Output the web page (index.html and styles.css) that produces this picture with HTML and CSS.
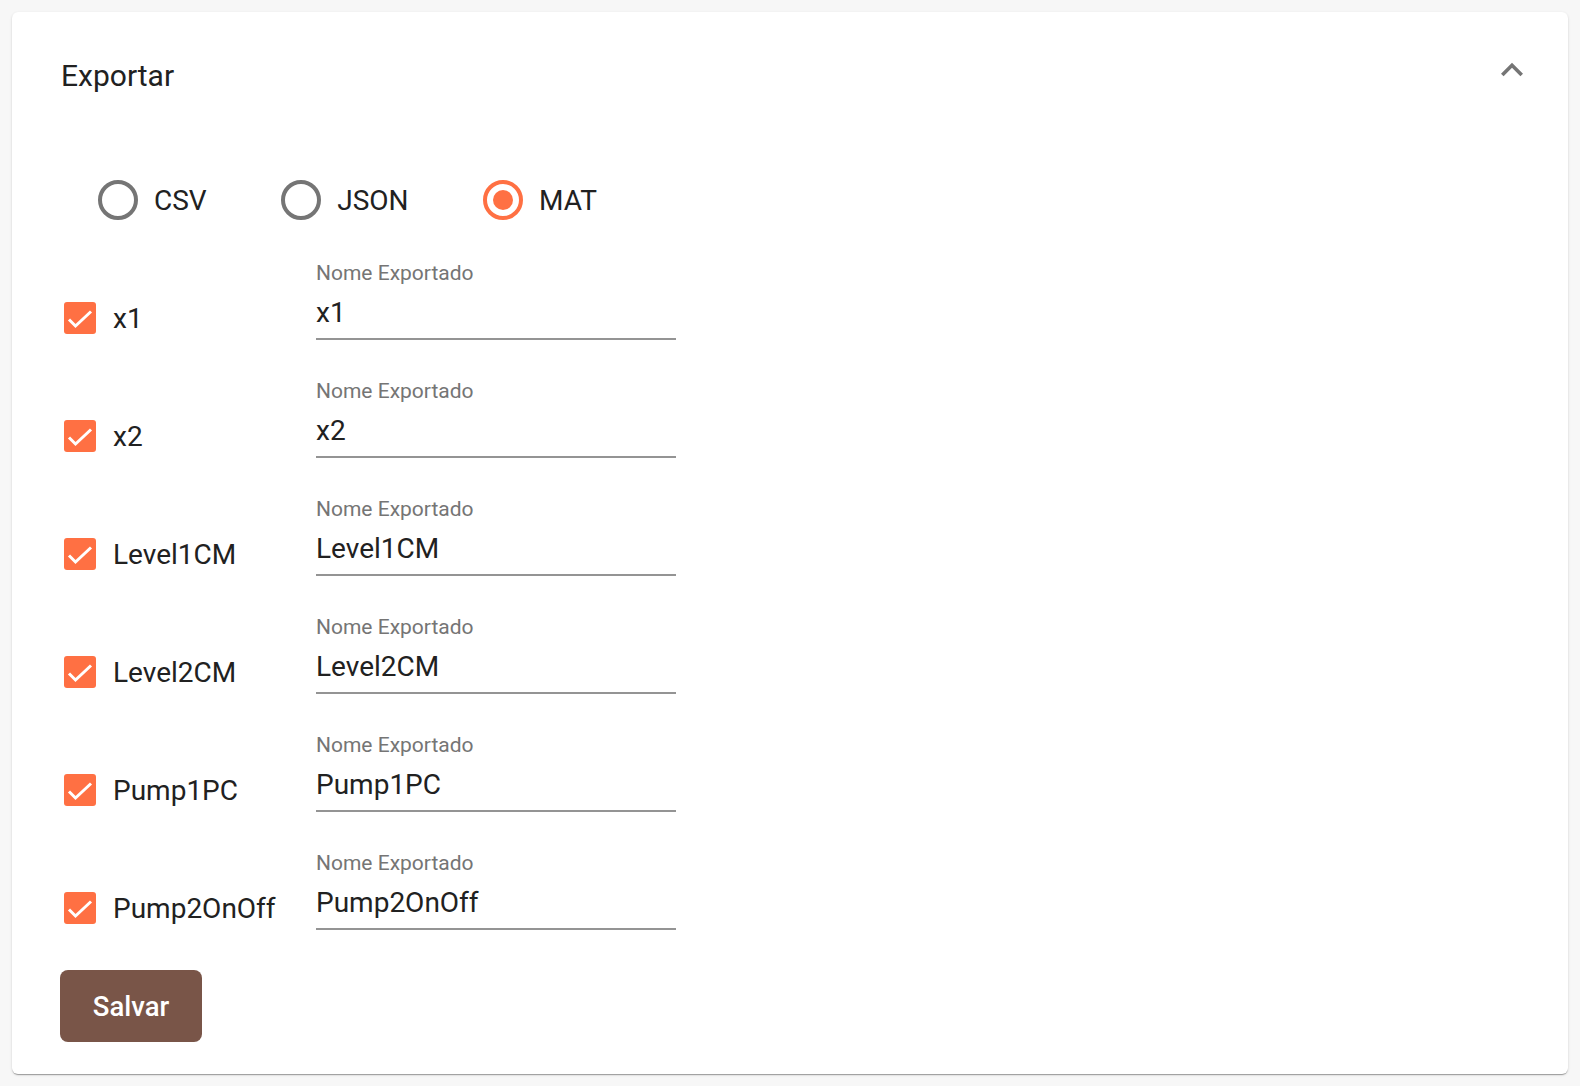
FILE: index.html
```html
<!DOCTYPE html>
<html lang="pt">
<head>
<meta charset="utf-8">
<title>Exportar</title>
<link rel="stylesheet" href="styles.css">
</head>
<body>
<section class="card">
  <header class="card-header">
    <h2 class="title">Exportar</h2>
    <svg class="chevron" viewBox="0 0 24 24" aria-hidden="true"><path d="M12 8l-6 6 1.41 1.41L12 10.83l4.59 4.58L18 14z"/></svg>
  </header>

  <div class="radio-group">
    <label class="radio"><span class="radio-icon"></span><span class="radio-text">CSV</span></label>
    <label class="radio"><span class="radio-icon"></span><span class="radio-text">JSON</span></label>
    <label class="radio checked"><span class="radio-icon"><span class="radio-dot"></span></span><span class="radio-text">MAT</span></label>
  </div>

  <div class="rows">
    <div class="row">
      <div class="check-cell"><span class="checkbox"><svg viewBox="0 0 32 32"><polyline points="5,17.5 11.5,24 27,9.5"/></svg></span><span class="check-label">x1</span></div>
      <div class="field"><span class="field-label">Nome Exportado</span><span class="field-input">x1</span></div>
    </div>
    <div class="row">
      <div class="check-cell"><span class="checkbox"><svg viewBox="0 0 32 32"><polyline points="5,17.5 11.5,24 27,9.5"/></svg></span><span class="check-label">x2</span></div>
      <div class="field"><span class="field-label">Nome Exportado</span><span class="field-input">x2</span></div>
    </div>
    <div class="row">
      <div class="check-cell"><span class="checkbox"><svg viewBox="0 0 32 32"><polyline points="5,17.5 11.5,24 27,9.5"/></svg></span><span class="check-label">Level1CM</span></div>
      <div class="field"><span class="field-label">Nome Exportado</span><span class="field-input">Level1CM</span></div>
    </div>
    <div class="row">
      <div class="check-cell"><span class="checkbox"><svg viewBox="0 0 32 32"><polyline points="5,17.5 11.5,24 27,9.5"/></svg></span><span class="check-label">Level2CM</span></div>
      <div class="field"><span class="field-label">Nome Exportado</span><span class="field-input">Level2CM</span></div>
    </div>
    <div class="row">
      <div class="check-cell"><span class="checkbox"><svg viewBox="0 0 32 32"><polyline points="5,17.5 11.5,24 27,9.5"/></svg></span><span class="check-label">Pump1PC</span></div>
      <div class="field"><span class="field-label">Nome Exportado</span><span class="field-input">Pump1PC</span></div>
    </div>
    <div class="row">
      <div class="check-cell"><span class="checkbox"><svg viewBox="0 0 32 32"><polyline points="5,17.5 11.5,24 27,9.5"/></svg></span><span class="check-label">Pump2OnOff</span></div>
      <div class="field"><span class="field-label">Nome Exportado</span><span class="field-input">Pump2OnOff</span></div>
    </div>
  </div>

  <button class="btn-save" type="button">Salvar</button>
</section>
</body>
</html>
```

FILE: styles.css
```css
* { box-sizing: border-box; }

html, body {
  margin: 0;
  background: #f7f7f7;
}

body {
  padding: 12px;
  font-family: Roboto, "Liberation Sans", Arial, sans-serif;
  color: #212121;
}

.card {
  background: #fff;
  border-radius: 6px;
  box-shadow: 0 2px 1px -1px rgba(0,0,0,0.2), 0 1px 1px 0 rgba(0,0,0,0.14), 0 1px 3px 0 rgba(0,0,0,0.12);
  padding: 0 34px 32px 48px;
  min-height: 1062px;
}

.card-header {
  display: flex;
  justify-content: space-between;
  align-items: flex-start;
  height: 128px;
  padding-top: 36px;
  padding-left: 1px;
}

.title {
  margin: 10px 0 0;
  font-size: 30px;
  font-weight: 400;
  line-height: 1.2;
  color: #212121;
}

.chevron {
  width: 44px;
  height: 44px;
  fill: #757575;
}

.radio-group {
  display: flex;
  align-items: center;
  margin-top: 40px;
  padding-left: 38px;
  height: 40px;
}

.radio {
  display: flex;
  align-items: center;
  margin-right: 74.5px;
}

.radio-icon {
  width: 40px;
  height: 40px;
  border: 4px solid #757575;
  border-radius: 50%;
  display: flex;
  align-items: center;
  justify-content: center;
}

.radio.checked .radio-icon { border-color: #ff7043; }

.radio-dot {
  width: 20px;
  height: 20px;
  border-radius: 50%;
  background: #ff7043;
}

.radio-text {
  margin-left: 16px;
  margin-top: 2px;
  font-size: 28px;
  line-height: 40px;
}

.rows {
  margin-top: 41px;
  display: flex;
  flex-direction: column;
  gap: 39px;
}

.row {
  display: flex;
  align-items: flex-end;
}

.check-cell {
  width: 256px;
  display: flex;
  align-items: center;
  margin-bottom: 4px;
  padding-left: 4px;
}

.checkbox {
  width: 32px;
  height: 32px;
  border-radius: 3px;
  background: #ff7043;
  display: flex;
}

.checkbox svg {
  width: 32px;
  height: 32px;
  fill: none;
  stroke: #fff;
  stroke-width: 3;
}

.check-label {
  margin-left: 17px;
  margin-top: 2px;
  font-size: 28px;
  line-height: 34px;
}

.field {
  width: 360px;
  display: flex;
  flex-direction: column;
  border-bottom: 2px solid #949494;
}

.field-label {
  font-size: 21px;
  line-height: 24px;
  color: #757575;
  margin-bottom: 11px;
}

.field-input {
  font-size: 28px;
  line-height: 34px;
  padding-bottom: 8px;
  color: #212121;
}

.btn-save {
  margin-top: 40px;
  width: 142px;
  height: 72px;
  border: none;
  border-radius: 8px;
  background: #795548;
  color: #fff;
  font-family: Roboto, "Liberation Sans", Arial, sans-serif;
  font-size: 27.5px;
  font-weight: 500;
  padding: 0;
  display: block;
}
```
